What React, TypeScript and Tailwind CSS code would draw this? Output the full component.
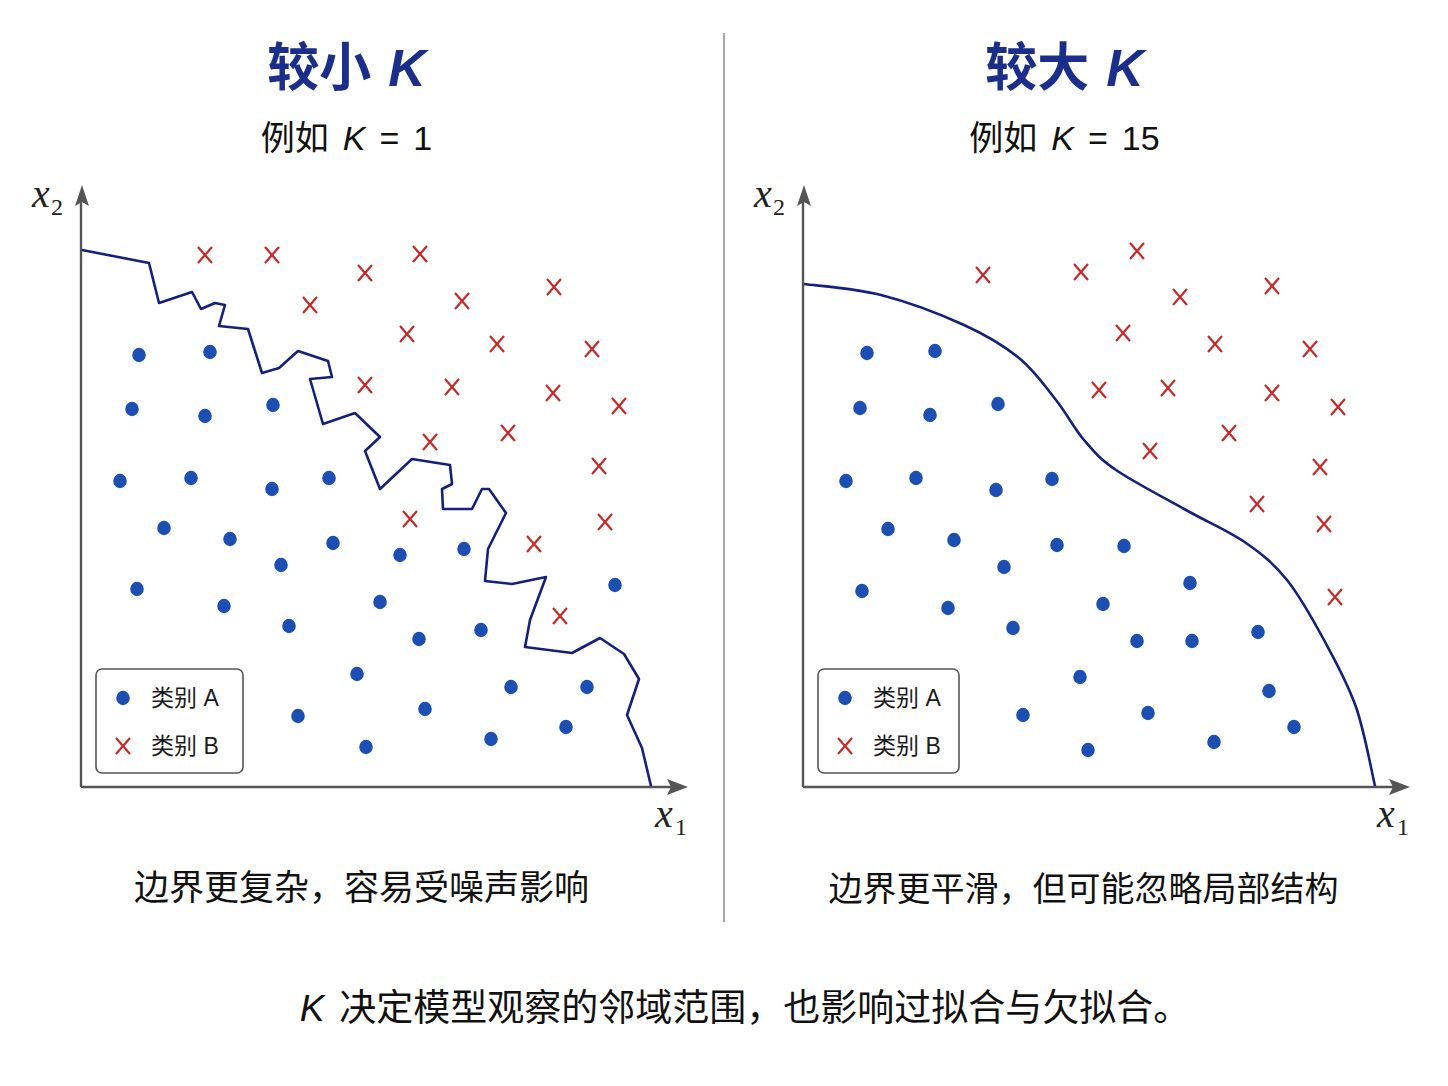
type Pt = [number, number];

const leftDots: Pt[] = [
  [139, 355], [210, 352], [132, 409], [205, 416], [273, 405],
  [120, 481], [191, 478], [272, 489], [329, 478], [164, 528],
  [230, 539], [333, 543], [400, 555], [464, 549], [281, 565],
  [137, 589], [224, 606], [380, 602], [289, 626], [419, 639],
  [481, 630], [615, 585], [357, 674], [511, 687], [587, 687],
  [298, 716], [425, 709], [491, 739], [566, 727], [366, 747],
];

const leftCrosses: Pt[] = [
  [205, 255], [272, 255], [365, 273], [420, 254], [310, 305],
  [462, 301], [554, 287], [407, 334], [497, 344], [592, 349],
  [365, 385], [452, 387], [553, 393], [619, 406], [430, 442],
  [508, 433], [599, 466], [410, 519], [605, 522], [534, 544],
  [560, 616],
];

const leftBoundary: Pt[] = [
  [82, 250], [149, 263], [159, 303], [192, 292], [201, 309], [215, 303],
  [225, 305], [219, 326], [248, 329], [262, 373], [279, 368], [298, 351],
  [328, 361], [332, 377], [310, 379], [323, 424], [355, 413], [380, 437],
  [365, 451], [380, 489], [412, 459], [450, 465], [452, 484], [442, 489],
  [443, 509], [472, 509], [482, 489], [489, 489], [506, 513], [488, 549],
  [485, 581], [512, 584], [546, 577], [530, 620], [525, 647], [572, 653],
  [600, 638], [624, 654], [639, 679], [627, 715], [642, 748], [651, 786],
];

const rightDots: Pt[] = [
  [867, 353], [935, 351], [860, 408], [930, 415], [998, 404],
  [846, 481], [916, 478], [996, 490], [1052, 479], [888, 529],
  [954, 540], [1057, 545], [1124, 546], [1004, 567], [862, 591],
  [948, 608], [1103, 604], [1190, 583], [1013, 628], [1137, 641],
  [1192, 641], [1258, 632], [1080, 677], [1269, 691], [1023, 715],
  [1148, 713], [1294, 727], [1214, 742], [1088, 750],
];

const rightCrosses: Pt[] = [
  [983, 275], [1081, 272], [1137, 251], [1180, 297], [1272, 286],
  [1123, 333], [1215, 344], [1310, 349], [1099, 390], [1168, 388],
  [1272, 393], [1338, 407], [1229, 433], [1150, 451], [1320, 467],
  [1257, 504], [1324, 524], [1335, 597],
];

const rightBoundary: Pt[] = [
  [804, 284], [881, 295], [964, 325], [1019, 358], [1056, 400], [1084, 440],
  [1116, 470], [1186, 510], [1246, 543], [1287, 580], [1324, 640], [1356, 707],
  [1375, 786],
];

const polyline = (pts: Pt[]) =>
  pts.map(([x, y], i) => `${i ? "L" : "M"}${x} ${y}`).join(" ");

// catmull-rom through the points
function smooth(pts: Pt[]) {
  let d = `M${pts[0][0]} ${pts[0][1]}`;
  for (let i = 0; i < pts.length - 1; i++) {
    const p0 = pts[i - 1] || pts[i];
    const p1 = pts[i];
    const p2 = pts[i + 1];
    const p3 = pts[i + 2] || p2;
    const c1x = p1[0] + (p2[0] - p0[0]) / 6;
    const c1y = p1[1] + (p2[1] - p0[1]) / 6;
    const c2x = p2[0] - (p3[0] - p1[0]) / 6;
    const c2y = p2[1] - (p3[1] - p1[1]) / 6;
    d += ` C${c1x} ${c1y} ${c2x} ${c2y} ${p2[0]} ${p2[1]}`;
  }
  return d;
}

const Cross = ({ x, y }: { x: number; y: number }) => (
  <path
    d={`M${x - 7} ${y - 8}L${x + 7} ${y + 8}M${x + 7} ${y - 8}L${x - 7} ${y + 8}`}
    stroke="#c62828"
    strokeWidth={2.2}
    fill="none"
  />
);

const Chart = ({
  ox,
  bx,
  dots,
  crosses,
  boundary,
  legendW,
}: {
  ox: number;
  bx: number;
  dots: Pt[];
  crosses: Pt[];
  boundary: string;
  legendW: number;
}) => {
  const ax = bx + 81;
  const tipX = bx + 688;
  const serif = "'Liberation Serif', 'DejaVu Serif', serif";
  const sans = "'Liberation Sans', 'Noto Sans CJK SC', sans-serif";
  return (
    <svg
      width={723}
      height={680}
      viewBox={`${ox} 170 723 680`}
      className="block"
    >
      {/* axes */}
      <path d={`M${ax} 787 L${ax} 200 M${ax} 787 L${tipX - 14} 787`} stroke="#555" strokeWidth={2.4} fill="none" />
      <path d={`M${ax + 1} 185 L${ax + 8} 206 L${ax + 1} 202 L${ax - 6} 206 Z`} fill="#555" />
      <path d={`M${tipX} 787 L${tipX - 21} 779 L${tipX - 17} 787 L${tipX - 21} 795 Z`} fill="#555" />

      <text x={bx + 32} y={207} fontFamily={serif} fontStyle="italic" fontSize={40} fill="#222">
        x
      </text>
      <text x={bx + 51} y={215} fontFamily={serif} fontSize={24} fill="#222">
        2
      </text>
      <text x={tipX - 33} y={827} fontFamily={serif} fontStyle="italic" fontSize={40} fill="#222">
        x
      </text>
      <text x={tipX - 13} y={835} fontFamily={serif} fontSize={24} fill="#222">
        1
      </text>

      <path d={boundary} stroke="#15207a" strokeWidth={2.6} fill="none" strokeLinejoin="round" />

      {dots.map(([x, y], i) => (
        <ellipse key={i} cx={x} cy={y} rx={6.8} ry={7.2} fill="#1d4fb3" />
      ))}
      {crosses.map(([x, y], i) => (
        <Cross key={i} x={x} y={y} />
      ))}

      {/* legend */}
      <rect x={bx + 96} y={669} width={legendW} height={104} rx={6} fill="white" stroke="#555" strokeWidth={1.6} />
      <ellipse cx={bx + 123} cy={698} rx={6.8} ry={7.2} fill="#1d4fb3" />
      <text x={bx + 151} y={706} fontFamily={sans} fontSize={23} fill="#1a1a1a">
        类别 A
      </text>
      <Cross x={bx + 123} y={746} />
      <text x={bx + 151} y={754} fontFamily={sans} fontSize={23} fill="#1a1a1a">
        类别 B
      </text>
    </svg>
  );
};

const Column = ({
  title,
  k,
  caption,
  shift,
  children,
}: {
  title: string;
  k: string;
  caption: React.ReactNode;
  shift: string;
  children: React.ReactNode;
}) => (
  <div className="flex w-[723px] flex-col items-center">
    <div className={`flex flex-col items-center ${shift}`}>
      <h1 className="mt-[9px] flex gap-[17px] text-[52px] leading-none font-bold text-[#1b2f8a]">
        <span>{title}</span>
        <i>K</i>
      </h1>
      <p className="mt-[27px] flex gap-[14px] text-[34px] leading-none text-[#111]">
        <span>例如</span>
        <i>K</i>
        <span>=</span>
        <span>{k}</span>
      </p>
    </div>
    <div className="mt-[15px]">{children}</div>
    {caption}
  </div>
);

export default function App() {
  return (
    <div className="flex h-[1086px] w-[1448px] flex-col bg-white font-['Liberation_Sans','Noto_Sans_CJK_SC',sans-serif]">
      <div className="mt-[33px] flex h-[889px]">
        <Column
          title="较小"
          k="1"
          shift="pr-[30px]"
          caption={<p className="mt-[20px] text-[35px] leading-none text-[#111]">边界更复杂，容易受噪声影响</p>}
        >
          <Chart ox={0} bx={0} dots={leftDots} crosses={leftCrosses} boundary={polyline(leftBoundary)} legendW={147} />
        </Column>
        <div className="w-[2px] bg-[#a8a8a8]" />
        <Column
          title="较大"
          k="15"
          shift="pr-[44px]"
          caption={<p className="mt-[22px] pr-[6px] text-[34px] leading-none text-[#111]">边界更平滑，但可能忽略局部结构</p>}
        >
          <Chart ox={725} bx={722} dots={rightDots} crosses={rightCrosses} boundary={smooth(rightBoundary)} legendW={141} />
        </Column>
      </div>
      <p className="mt-[68px] flex justify-center gap-[15px] pl-[42px] text-[37px] leading-none text-[#111]">
        <i>K</i>
        <span>决定模型观察的邻域范围，也影响过拟合与欠拟合。</span>
      </p>
    </div>
  );
}
